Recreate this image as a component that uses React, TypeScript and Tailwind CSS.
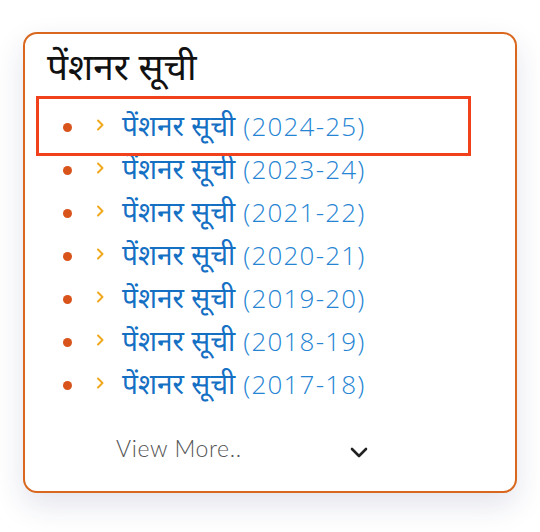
import React from "react";

const years = ["2024-25", "2023-24", "2021-22", "2020-21", "2019-20", "2018-19", "2017-18"];

export default function App() {
  return (
    <div className="w-[540px] h-[532px] bg-white pt-[32px] pl-[23px]">
      <div className="relative w-[494px] h-[461px] rounded-[14px] border-2 border-[#d9671d] bg-white shadow-[0_12px_30px_rgba(40,50,110,0.13)] flex flex-col">
        <h2
          className="pl-[22px] pt-[14px] h-[72px] text-[37px] leading-[46px] font-normal text-[#111]"
          style={{ fontFamily: '"Noto Sans Devanagari", "Noto Sans", sans-serif' }}
        >
          पेंशनर सूची
        </h2>
        <ul className="flex flex-col">
          {years.map((y) => (
            <li key={y} className="h-[43px] flex items-center">
              <span className="ml-[38px] w-[9px] h-[9px] rounded-full bg-[#d9541a]" />
              <svg className="ml-[23px] -mt-[6px] w-[10px] h-[14px]" viewBox="0 0 10 14" fill="none">
                <path d="M3 2.5 L7.5 7 L3 11.5" stroke="#f0a91e" strokeWidth="2" strokeLinecap="round" strokeLinejoin="round" />
              </svg>
              <span className="ml-[17px] flex items-baseline leading-[30px] text-[#1570c4] whitespace-nowrap">
                <span className="text-[28px] font-normal" style={{ fontFamily: '"Noto Sans Devanagari", "Noto Sans", sans-serif' }}>
                  पेंशनर सूची
                </span>
                <span className="ml-[8px] text-[26px] tracking-[1.2px] font-light text-[#2584d3]" style={{ fontFamily: '"Open Sans", sans-serif' }}>
                  ({y})
                </span>
              </span>
            </li>
          ))}
        </ul>
        <div className="flex items-center mt-[26px] pl-[91px]">
          <span className="text-[23px] tracking-[0.6px] font-light text-[#555] leading-[30px]" style={{ fontFamily: 'Lato, sans-serif' }}>
            View More..
          </span>
          <svg className="ml-[107px] mt-[8px] w-[20px] h-[14px]" viewBox="0 0 20 14" fill="none">
            <path d="M3 4 L10 11 L17 4" stroke="#222" strokeWidth="2.6" strokeLinecap="round" strokeLinejoin="round" />
          </svg>
        </div>
        <div className="absolute left-[11px] top-[62px] w-[435px] h-[60px] border-[3px] border-[#f0401c] pointer-events-none" />
      </div>
    </div>
  );
}
